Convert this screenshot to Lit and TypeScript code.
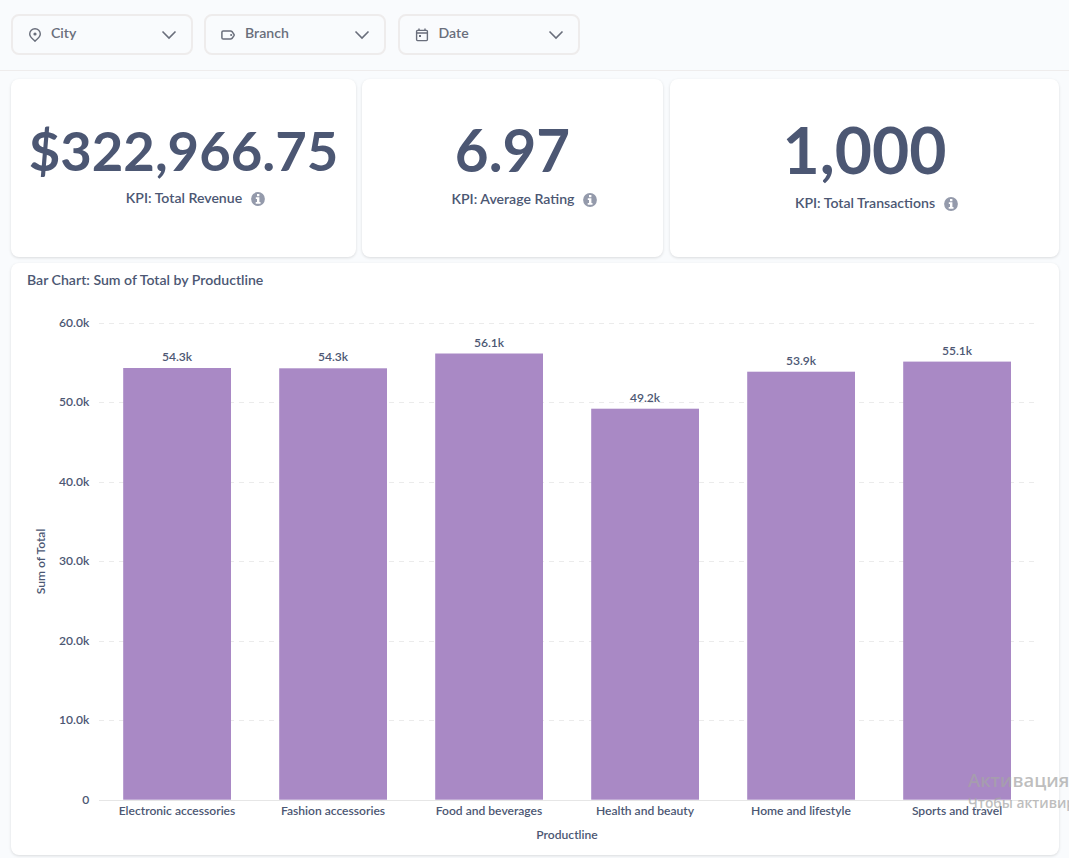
import { LitElement, html, svg, css } from "lit";
import { customElement, property } from "lit/decorators.js";

const PIN = svg`<path d="M7 13.2 C4.6 10.8 1.7 8.9 1.7 5.9 A5.3 5.2 0 0 1 12.3 5.9 C12.3 8.9 9.4 10.8 7 13.2Z" fill="none" stroke="currentColor" stroke-width="1.4"/><circle cx="7" cy="6" r="1.6" fill="currentColor"/>`;
const TAG = svg`<path d="M2.2 3 H9.6 Q10.4 3 11 3.6 L13 6.4 Q13.3 7 13 7.6 L11 10.4 Q10.4 11 9.6 11 H2.2 Q.9 11 .9 9.7 V4.3 Q.9 3 2.2 3Z" fill="none" stroke="currentColor" stroke-width="1.5"/><circle cx="10.2" cy="7" r="1.1" fill="currentColor"/>`;
const CALENDAR = svg`<path d="M2.5 2.4 H11.5 Q12.4 2.4 12.4 3.3 V11.6 Q12.4 12.6 11.5 12.6 H2.5 Q1.6 12.6 1.6 11.6 V3.3 Q1.6 2.4 2.5 2.4Z" fill="none" stroke="currentColor" stroke-width="1.4"/><path d="M1.6 5 H12.4 M4 .4 V2.6 M10 .4 V2.6" stroke="currentColor" stroke-width="1.4"/><rect x="4" y="7" width="2" height="2" fill="currentColor"/>`;

@customElement("filter-picker")
class FilterPicker extends LitElement {
  @property() label = "";
  @property({ attribute: false }) icon: unknown = null;

  static styles = css`
    :host {
      display: flex;
      align-items: center;
      box-sizing: border-box;
      width: 182px;
      height: 41px;
      padding: 0 14px 0 15px;
      border: 2px solid #eeecec;
      border-radius: 8px;
      color: #696e7b;
      font: 600 14.1px/17px Lato, sans-serif;
    }
    .icon { width: 14px; height: 14px; margin-top: 1px; flex: none; }
    .label { flex: 1; margin: 0 0 4px var(--label-gap, 9px); }
    .chevron { width: 16px; height: 10px; flex: none; margin-top: 1px; }
  `;

  render() {
    return html`
      <svg class="icon" viewBox="0 0 14 14">${this.icon}</svg>
      <span class="label">${this.label}</span>
      <svg class="chevron" viewBox="0 0 16 10">
        <path d="M1.5 1.5 L8 8 L14.5 1.5" fill="none" stroke="currentColor" stroke-width="1.6" />
      </svg>
    `;
  }
}

@customElement("kpi-card")
class KpiCard extends LitElement {
  @property() value = "";
  @property() label = "";

  static styles = css`
    :host {
      display: flex;
      flex-direction: column;
      align-items: center;
      box-sizing: border-box;
      background: #fff;
      border-radius: 8px;
      box-shadow: 0 1px 3px rgba(0, 0, 0, 0.13);
      color: #4c5773;
      font-family: Lato, sans-serif;
      font-weight: 600;
      white-space: nowrap;
    }
    .value { font-size: var(--value-size); line-height: var(--value-line); font-weight: 700; }
    .caption { display: flex; align-items: center; font-size: 14.1px; line-height: 18px; padding-left: 24px; }
    .info { width: 14px; height: 14px; margin: 2px 0 0 9px; }
  `;

  render() {
    return html`
      <div class="value">${this.value}</div>
      <div class="caption">
        <span>${this.label}</span>
        <svg class="info" viewBox="0 0 14 14">
          <circle cx="7" cy="7" r="6.9" fill="#949aab" />
          <path d="M6 2h2.4v2.2H6z M4.8 5.3h3.6v4.7h1.1v1.7H4.7V10h1.3V7H4.8z" fill="#fff" />
        </svg>
      </div>
    `;
  }
}

const BARS = [
  { name: "Electronic accessories", value: "54.3k", top: 368 },
  { name: "Fashion accessories", value: "54.3k", top: 368.3 },
  { name: "Food and beverages", value: "56.1k", top: 353.5 },
  { name: "Health and beauty", value: "49.2k", top: 408.7 },
  { name: "Home and lifestyle", value: "53.9k", top: 371.7 },
  { name: "Sports and travel", value: "55.1k", top: 361.6 },
];
const TICKS = [
  { label: "60.0k", y: 323.5 },
  { label: "50.0k", y: 402.5 },
  { label: "40.0k", y: 482.5 },
  { label: "30.0k", y: 561.5 },
  { label: "20.0k", y: 641.5 },
  { label: "10.0k", y: 720.5 },
];

@customElement("bar-chart")
class BarChart extends LitElement {
  static styles = css`
    :host {
      display: block;
      background: #fff;
      border-radius: 8px;
      box-shadow: 0 1px 3px rgba(0, 0, 0, 0.13);
      color: #4c5773;
      font-family: Lato, sans-serif;
      font-weight: 600;
    }
    .title { height: 27px; padding: 8px 0 0 16px; font-size: 14.1px; line-height: 18px; box-sizing: border-box; }
    .plot { display: block; width: 1048px; height: 565px; }
    .text { fill: #4c5773; font-size: 12.08px; }
    .end { text-anchor: end; }
    .mid { text-anchor: middle; }
    .grid { stroke: #ebebeb; stroke-dasharray: 5 5; }
    .axis { stroke: #e6e6e6; }
    .bar { fill: #a989c5; }
  `;

  render() {
    return html`
      <div class="title">Bar Chart: Sum of Total by Productline</div>
      <svg class="plot" viewBox="11 290 1048 565">
        ${TICKS.map((t) => svg`
          <line class="grid" x1="99" x2="1035" y1=${t.y} y2=${t.y} />
          <text class="text end" x="89.3" y=${t.y + 3.7}>${t.label}</text>`)}
        <text class="text end" x="89.3" y="804">0</text>
        <line class="axis" x1="99" x2="1035" y1="800.5" y2="800.5" />
        ${BARS.map((b, i) => svg`
          <rect class="bar" x=${123.2 + i * 156} y=${b.top} width="107.8" height=${799.7 - b.top} />
          <text class="text mid" x=${177 + i * 156} y=${Math.round(b.top) - 7}>${b.value}</text>
          <text class="text mid" x=${177 + i * 156} y="815">${b.name}</text>`)}
        <text class="text mid" x="567" y="839">Productline</text>
        <text class="text mid" transform="translate(45 561.5) rotate(-90)">Sum of Total</text>
      </svg>
    `;
  }
}

@customElement("app-root")
class AppRoot extends LitElement {
  static styles = css`
    :host {
      display: block;
      position: relative;
      width: 1069px;
      height: 858px;
      overflow: hidden;
      background: #f9fbfd;
    }
    .filters {
      display: flex;
      gap: 11px;
      box-sizing: border-box;
      height: 71px;
      padding: 14px 0 0 11px;
      border-bottom: 1px solid #eeecec;
    }
    .branch { --label-gap: 10px; }
    .date { margin-left: 1px; --label-gap: 9.5px; }
    .kpis { display: flex; height: 178px; padding: 8px 0 6px 11px; }
    .revenue { width: 345px; margin-right: 6px; padding-top: 36px; --value-size: 54.4px; --value-line: 71px; --value-gap: 3px; }
    .rating { width: 301px; margin-right: 7px; padding-top: 33px; --value-size: 58.3px; --value-line: 74px; --value-gap: 4px; }
    .count { width: 389px; padding-top: 30px; --value-size: 64.2px; --value-line: 81px; --value-gap: 4px; }
    .revenue, .rating, .count { row-gap: var(--value-gap); }
    .chart { width: 1048px; height: 592px; margin-left: 11px; }
    .watermark {
      position: absolute;
      left: 968px;
      top: 767px;
      white-space: nowrap;
      color: rgba(165, 165, 165, 0.72);
      font-family: "Open Sans", sans-serif;
    }
    .heading { font-size: 18.4px; line-height: 25px; font-weight: 600; }
    .detail { font-size: 13.8px; line-height: 21px; font-weight: 600; }
  `;

  render() {
    return html`
      <div class="filters">
        <filter-picker label="City" .icon=${PIN}></filter-picker>
        <filter-picker class="branch" label="Branch" .icon=${TAG}></filter-picker>
        <filter-picker class="date" label="Date" .icon=${CALENDAR}></filter-picker>
      </div>
      <div class="kpis">
        <kpi-card class="revenue" value="$322,966.75" label="KPI: Total Revenue"></kpi-card>
        <kpi-card class="rating" value="6.97" label="KPI: Average Rating"></kpi-card>
        <kpi-card class="count" value="1,000" label="KPI: Total Transactions"></kpi-card>
      </div>
      <bar-chart class="chart"></bar-chart>
      <div class="watermark">
        <div class="heading">Активация</div>
        <div class="detail">Чтобы активир</div>
      </div>
    `;
  }
}
